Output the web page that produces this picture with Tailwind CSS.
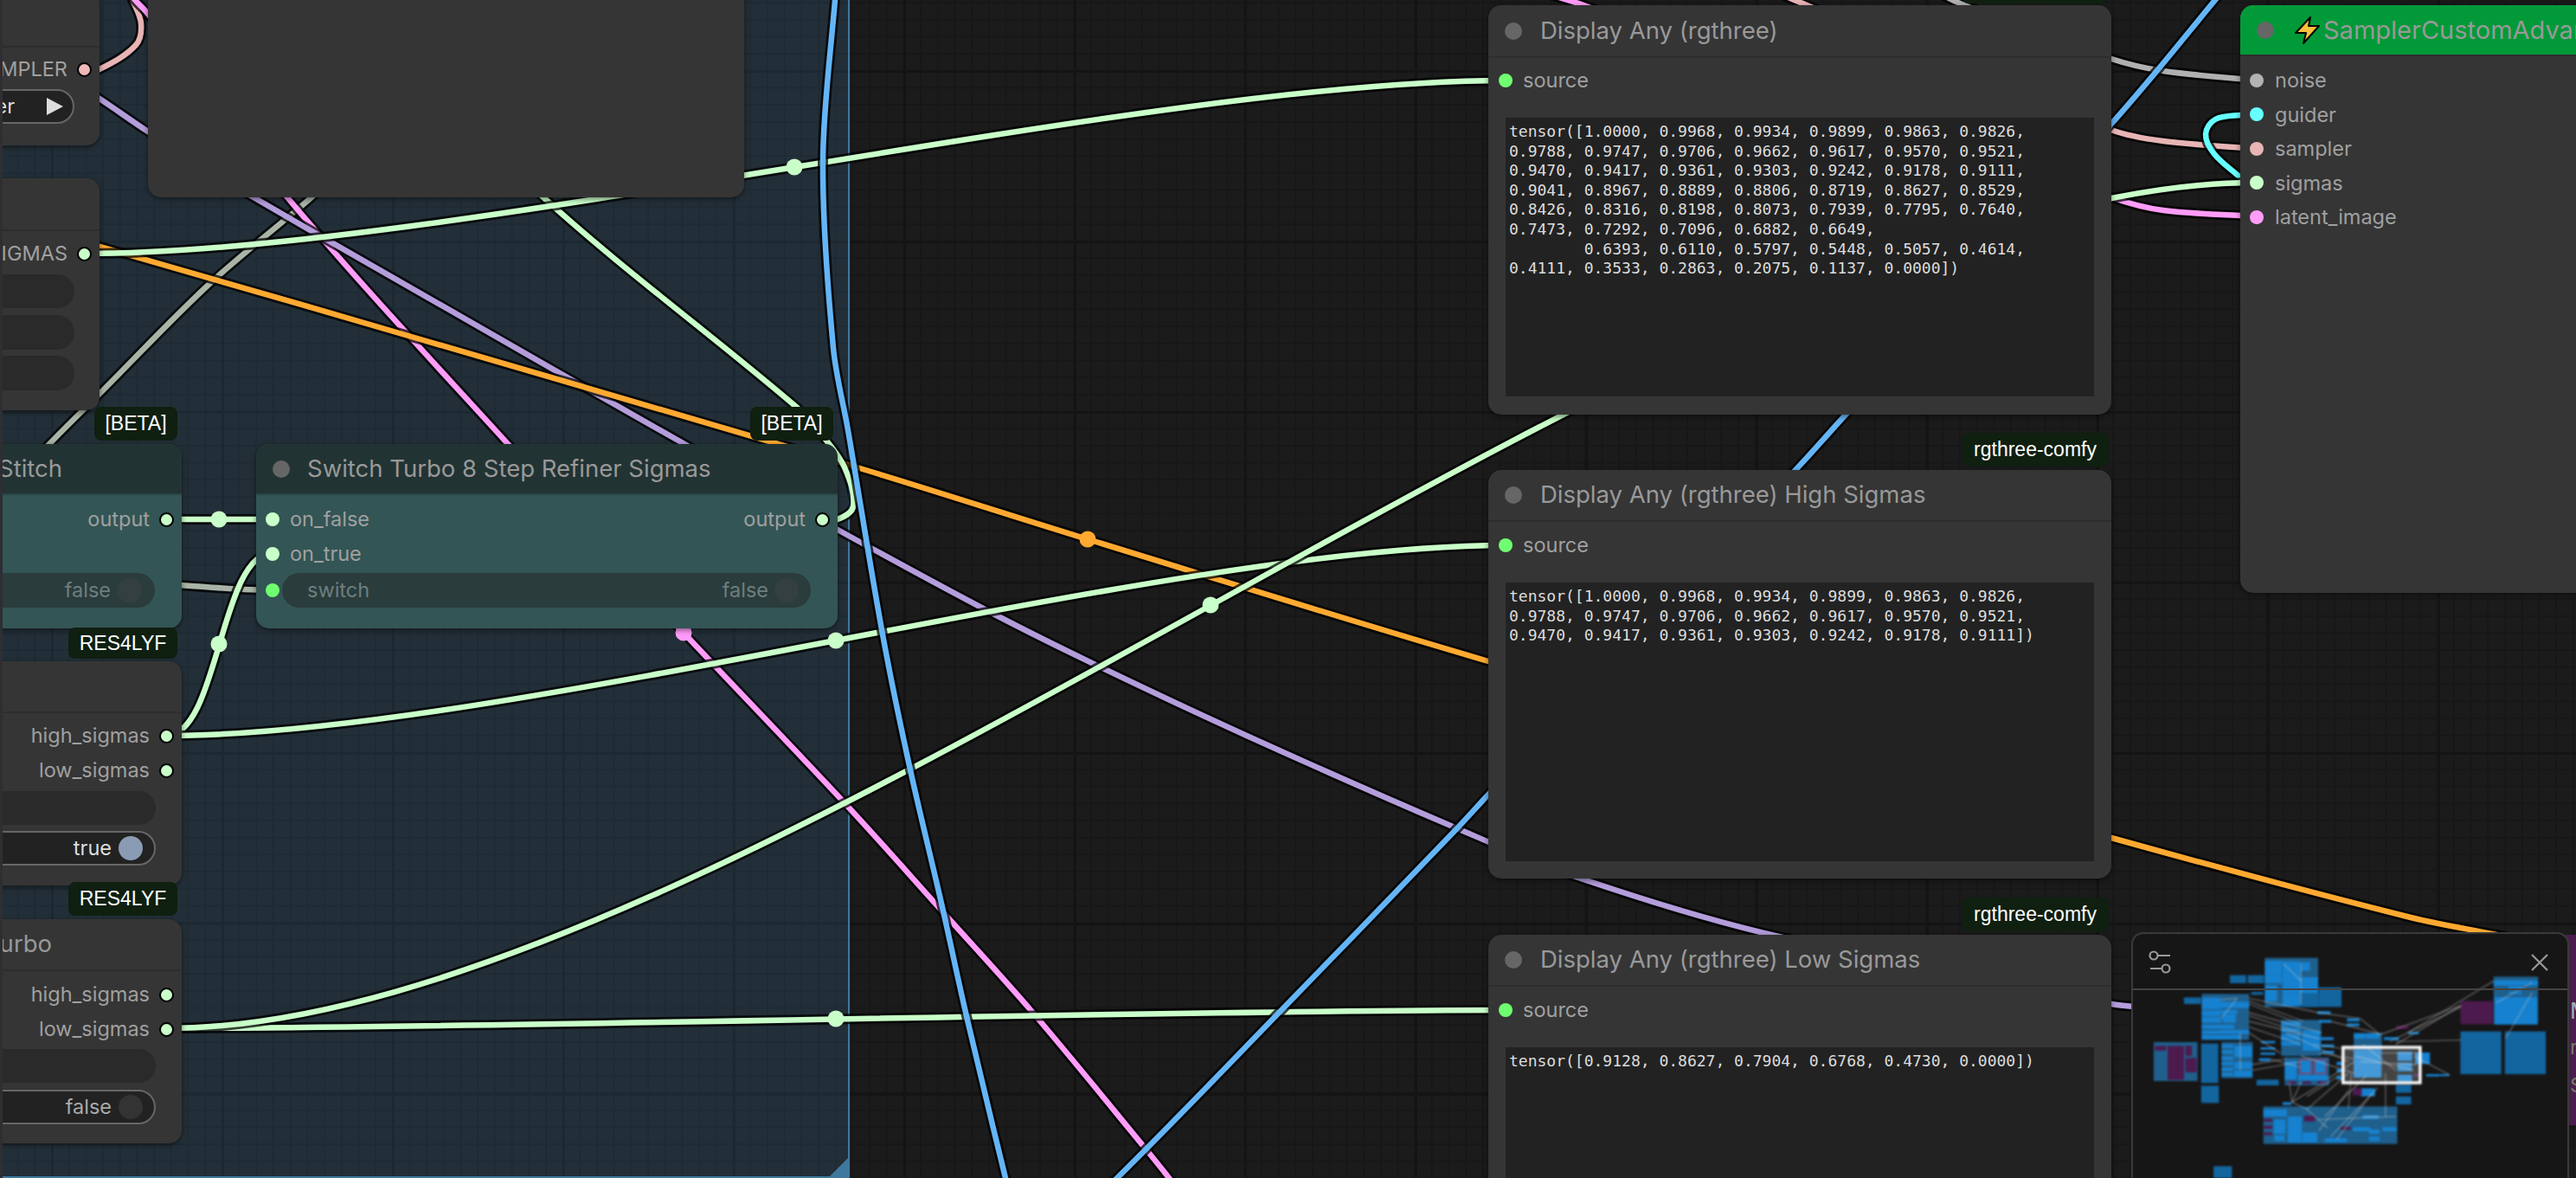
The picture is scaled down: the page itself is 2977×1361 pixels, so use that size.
<!DOCTYPE html>
<html lang="en">
<head>
<meta charset="UTF-8">
<title>ComfyUI</title>
<script src="https://cdn.jsdelivr.net/npm/@tailwindcss/browser@4"></script>
</head>
<body class="bg-[#1b1b1b]">
<div class="relative w-[2977px] h-[1361px] overflow-hidden font-[Inter,sans-serif] text-[23.5px] text-[#a0a0a0] bg-[#1b1b1b] bg-[linear-gradient(90deg,#141414_3px,transparent_3px),linear-gradient(#141414_3px,transparent_3px),linear-gradient(90deg,#171717_2px,transparent_2px),linear-gradient(#171717_2px,transparent_2px)] bg-[size:197px_197px,197px_197px,19.7px_19.7px,19.7px_19.7px] bg-[position:59px_81px,59px_81px,0px_2px,0px_2px]">

  <!-- group behind the nodes -->
  <div class="absolute left-0 top-[-10px] w-[982px] h-[1371px] bg-[#3f789e]/[0.22] border-r-2 border-b-2 border-[#3f789e]">
    <svg class="absolute right-0 bottom-0" width="21" height="21"><polygon points="21,0 21,21 0,21" fill="#3f789e"/></svg>
  </div>

  <!-- wires, filled by the script below -->
  <svg id="wires" class="absolute left-0 top-0" width="2977" height="1361"></svg>

  <!-- purple node under the minimap -->
  <div class="absolute left-[2950px] top-[1080px] w-[80px] h-[220px] bg-[#4a1d4e] text-[#aaa]">
    <div class="pl-[20px] pt-[72px] text-[26px] leading-[32px]">M</div>
    <div class="pl-[20px] pt-[10px] text-[#776] leading-[32px]">r</div>
    <div class="pl-[20px] pt-[12px] text-[#776] leading-[32px]">S</div>
  </div>

  <!-- sampler select node, left edge -->
  <div class="absolute left-[-300px] top-[-10px] w-[415px] h-[178px] rounded-[15px] bg-[#353535] shadow-[0_2px_6px_rgba(0,0,0,0.5)] flex flex-col">
    <div class="h-[65px] border-b-2 border-[#2d2d2d] shrink-0"></div>
    <div class="h-[40px] mt-[5px] flex items-center justify-end gap-[11px] pr-[9px]"><span>SAMPLER</span><span class="w-[17px] h-[17px] rounded-full bg-[#f0b8b8] border-2 border-black"></span></div>
    <div class="h-[40px] mt-[3px] mr-[29px] ml-[30px] rounded-full bg-[#222] border-2 border-[#666] flex items-center justify-end text-[#ddd] pr-[11px] gap-[37px]"><span>sampler</span><svg width="19" height="20" viewBox="0 0 19 20"><polygon points="0,0 19,10 0,20" fill="#ddd"/></svg></div>
  </div>

  <!-- large empty node -->
  <div class="absolute left-[171px] top-[-20px] w-[689px] h-[248px] rounded-[15px] bg-[#353535] shadow-[0_2px_6px_rgba(0,0,0,0.5)]"></div>

  <!-- sigmas node, left edge -->
  <div class="absolute left-[-300px] top-[206px] w-[415px] h-[268px] rounded-[15px] bg-[#353535] shadow-[0_2px_6px_rgba(0,0,0,0.5)] flex flex-col">
    <div class="h-[61px] border-b-2 border-[#2d2d2d] shrink-0"></div>
    <div class="h-[40px] mt-[6px] flex items-center justify-end gap-[11px] pr-[9px]"><span>SIGMAS</span><span class="w-[17px] h-[17px] rounded-full bg-[#c9ffc9] border-2 border-black"></span></div>
    <div class="h-[39px] mt-[4px] mr-[29px] ml-[30px] rounded-full bg-[#2a2a2a]"></div>
    <div class="h-[40px] mt-[8px] mr-[29px] ml-[30px] rounded-full bg-[#2a2a2a]"></div>
    <div class="h-[40px] mt-[7px] mr-[29px] ml-[30px] rounded-full bg-[#2a2a2a]"></div>
  </div>

  <!-- stitch node, left edge -->
  <div class="absolute left-[-300px] top-[513px] w-[510px] h-[213px] rounded-[15px] bg-[#335555] shadow-[0_2px_6px_rgba(0,0,0,0.5)] flex flex-col">
    <div class="h-[59px] rounded-t-[15px] bg-[#223333] border-b-2 border-[#2a4444] shrink-0 flex items-center justify-end pr-[138px] text-[#999] text-[27.5px]">Stitch</div>
    <div class="h-[40px] mt-[8px] flex items-center justify-end gap-[11px] pr-[9px]"><span>output</span><span class="w-[17px] h-[17px] rounded-full bg-[#c9ffc9] border-2 border-black"></span></div>
    <div class="h-[40px] mt-[42px] mr-[31px] ml-[30px] rounded-full bg-[#2a3c3c] flex items-center justify-end gap-[8px] pr-[15px] text-[#6d7f7f]"><span>false</span><span class="w-[28px] h-[28px] rounded-full bg-[#33403f]"></span></div>
  </div>

  <!-- switch node -->
  <div class="absolute left-[296px] top-[513px] w-[672px] h-[213px] rounded-[15px] bg-[#335555] shadow-[0_2px_6px_rgba(0,0,0,0.5)] flex flex-col">
    <div class="h-[59px] rounded-t-[15px] bg-[#223333] border-b-2 border-[#2a4444] shrink-0 flex items-center gap-[20px] pl-[19px] text-[#999] text-[27.5px]"><span class="w-[20px] h-[20px] rounded-full bg-[#666]"></span><span>Switch Turbo 8 Step Refiner Sigmas</span></div>
    <div class="h-[40px] mt-[8px] flex items-center justify-between pl-[11px] pr-[9px]">
      <div class="flex items-center gap-[12px]"><span class="w-[16px] h-[16px] rounded-full bg-[#c9ffc9]"></span><span>on_false</span></div>
      <div class="flex items-center gap-[11px]"><span>output</span><span class="w-[17px] h-[17px] rounded-full bg-[#c9ffc9] border-2 border-black"></span></div>
    </div>
    <div class="h-[40px] flex items-center gap-[12px] pl-[11px]"><span class="w-[16px] h-[16px] rounded-full bg-[#c9ffc9]"></span><span>on_true</span></div>
    <div class="h-[40px] mt-[2px] flex items-center gap-[3px] pl-[11px] pr-[31px]">
      <span class="w-[16px] h-[16px] rounded-full bg-[#70ff70] shrink-0"></span>
      <div class="h-[40px] flex-1 rounded-full bg-[#2a3c3c] flex items-center justify-between pl-[29px] pr-[14px] text-[#6d7f7f]"><span>switch</span><div class="flex items-center gap-[7px]"><span>false</span><span class="w-[28px] h-[28px] rounded-full bg-[#33403f]"></span></div></div>
    </div>
  </div>

  <!-- sigma split nodes, left edge -->
  <div class="absolute left-[-300px] top-[764px] w-[510px] h-[259px] rounded-[15px] bg-[#353535] shadow-[0_2px_6px_rgba(0,0,0,0.5)] flex flex-col">
    <div class="h-[60px] border-b-2 border-[#2d2d2d] shrink-0"></div>
    <div class="h-[40px] mt-[6px] flex items-center justify-end gap-[11px] pr-[9px]"><span>high_sigmas</span><span class="w-[17px] h-[17px] rounded-full bg-[#c9ffc9] border-2 border-black"></span></div>
    <div class="h-[40px] flex items-center justify-end gap-[11px] pr-[9px]"><span>low_sigmas</span><span class="w-[17px] h-[17px] rounded-full bg-[#c9ffc9] border-2 border-black"></span></div>
    <div class="h-[39px] mt-[4px] mr-[30px] ml-[30px] rounded-full bg-[#2a2a2a]"></div>
    <div class="h-[40px] mt-[7px] mr-[30px] ml-[30px] rounded-full bg-[#222] border-2 border-[#666] flex items-center justify-end gap-[8px] pr-[13px] text-[#ddd]"><span>true</span><span class="w-[28px] h-[28px] rounded-full bg-[#8a9bb4]"></span></div>
  </div>

  <div class="absolute left-[-300px] top-[1062px] w-[510px] h-[259px] rounded-[15px] bg-[#353535] shadow-[0_2px_6px_rgba(0,0,0,0.5)] flex flex-col">
    <div class="h-[60px] border-b-2 border-[#2d2d2d] shrink-0 flex items-center justify-end pr-[150px] text-[#999] text-[27.5px]">Turbo</div>
    <div class="h-[40px] mt-[7px] flex items-center justify-end gap-[11px] pr-[9px]"><span>high_sigmas</span><span class="w-[17px] h-[17px] rounded-full bg-[#c9ffc9] border-2 border-black"></span></div>
    <div class="h-[40px] flex items-center justify-end gap-[11px] pr-[9px]"><span>low_sigmas</span><span class="w-[17px] h-[17px] rounded-full bg-[#c9ffc9] border-2 border-black"></span></div>
    <div class="h-[39px] mt-[3px] mr-[30px] ml-[30px] rounded-full bg-[#2a2a2a]"></div>
    <div class="h-[40px] mt-[8px] mr-[30px] ml-[30px] rounded-full bg-[#222] border-2 border-[#666] flex items-center justify-end gap-[8px] pr-[13px] text-[#aaa]"><span>false</span><span class="w-[28px] h-[28px] rounded-full bg-[#333]"></span></div>
  </div>

  <!-- display nodes -->
  <div class="absolute left-[1720px] top-[6px] w-[720px] h-[473px] rounded-[15px] bg-[#353535] shadow-[0_2px_6px_rgba(0,0,0,0.5)] flex flex-col">
    <div class="h-[61px] border-b-2 border-[#2d2d2d] shrink-0 flex items-center gap-[21px] pl-[19px] text-[#999] text-[27.5px]"><span class="w-[20px] h-[20px] rounded-full bg-[#666]"></span><span>Display Any (rgthree)</span></div>
    <div class="h-[40px] mt-[6px] flex items-center gap-[12px] pl-[12px]"><span class="w-[16px] h-[16px] rounded-full bg-[#70ff70]"></span><span>source</span></div>
    <pre class="h-[322px] mt-[23px] mx-[20px] pl-[4px] pt-[5px] bg-[#222] font-['DejaVu_Sans_Mono',monospace] text-[18px] leading-[22.6px] text-[#ddd]">tensor([1.0000, 0.9968, 0.9934, 0.9899, 0.9863, 0.9826,
0.9788, 0.9747, 0.9706, 0.9662, 0.9617, 0.9570, 0.9521,
0.9470, 0.9417, 0.9361, 0.9303, 0.9242, 0.9178, 0.9111,
0.9041, 0.8967, 0.8889, 0.8806, 0.8719, 0.8627, 0.8529,
0.8426, 0.8316, 0.8198, 0.8073, 0.7939, 0.7795, 0.7640,
0.7473, 0.7292, 0.7096, 0.6882, 0.6649,
        0.6393, 0.6110, 0.5797, 0.5448, 0.5057, 0.4614,
0.4111, 0.3533, 0.2863, 0.2075, 0.1137, 0.0000])</pre>
  </div>

  <div class="absolute left-[1720px] top-[543px] w-[720px] h-[472px] rounded-[15px] bg-[#353535] shadow-[0_2px_6px_rgba(0,0,0,0.5)] flex flex-col">
    <div class="h-[60px] border-b-2 border-[#2d2d2d] shrink-0 flex items-center gap-[21px] pl-[19px] text-[#999] text-[27.5px]"><span class="w-[20px] h-[20px] rounded-full bg-[#666]"></span><span>Display Any (rgthree) High Sigmas</span></div>
    <div class="h-[40px] mt-[7px] flex items-center gap-[12px] pl-[12px]"><span class="w-[16px] h-[16px] rounded-full bg-[#70ff70]"></span><span>source</span></div>
    <pre class="h-[322px] mt-[23px] mx-[20px] pl-[4px] pt-[5px] bg-[#222] font-['DejaVu_Sans_Mono',monospace] text-[18px] leading-[22.6px] text-[#ddd]">tensor([1.0000, 0.9968, 0.9934, 0.9899, 0.9863, 0.9826,
0.9788, 0.9747, 0.9706, 0.9662, 0.9617, 0.9570, 0.9521,
0.9470, 0.9417, 0.9361, 0.9303, 0.9242, 0.9178, 0.9111])</pre>
  </div>

  <div class="absolute left-[1720px] top-[1080px] w-[720px] h-[472px] rounded-[15px] bg-[#353535] shadow-[0_2px_6px_rgba(0,0,0,0.5)] flex flex-col">
    <div class="h-[60px] border-b-2 border-[#2d2d2d] shrink-0 flex items-center gap-[21px] pl-[19px] text-[#999] text-[27.5px]"><span class="w-[20px] h-[20px] rounded-full bg-[#666]"></span><span>Display Any (rgthree) Low Sigmas</span></div>
    <div class="h-[40px] mt-[7px] flex items-center gap-[12px] pl-[12px]"><span class="w-[16px] h-[16px] rounded-full bg-[#70ff70]"></span><span>source</span></div>
    <pre class="h-[322px] mt-[23px] mx-[20px] pl-[4px] pt-[5px] bg-[#222] font-['DejaVu_Sans_Mono',monospace] text-[18px] leading-[22.6px] text-[#ddd]">tensor([0.9128, 0.8627, 0.7904, 0.6768, 0.4730, 0.0000])</pre>
  </div>

  <!-- sampler node -->
  <div class="absolute left-[2589px] top-[6px] w-[520px] h-[679px] rounded-[15px] bg-[#353535] shadow-[0_2px_6px_rgba(0,0,0,0.5)] flex flex-col">
    <div class="h-[59px] rounded-t-[15px] bg-[#029a38] border-b-2 border-[#2d2d2d] shrink-0 flex items-center pl-[19px] text-[#999] text-[29px] whitespace-nowrap">
      <span class="w-[20px] h-[20px] rounded-full bg-[#666] mr-[24px]"></span>
      <svg class="mr-[4px]" width="29" height="32" viewBox="0 0 29 32"><polygon points="18,1 1,19 13,19 10,31 28,11 16,11" fill="#fbbf3b" stroke="#000" stroke-width="2" stroke-linejoin="round"/></svg>
      <span>SamplerCustomAdvanced</span>
    </div>
    <div class="pt-[8px] pl-[11px] flex flex-col">
      <div class="h-[39.5px] flex items-center gap-[13px]"><span class="w-[16px] h-[16px] rounded-full bg-[#b3b3b3]"></span><span>noise</span></div>
      <div class="h-[39.5px] flex items-center gap-[13px]"><span class="w-[16px] h-[16px] rounded-full bg-[#6ff]"></span><span>guider</span></div>
      <div class="h-[39.5px] flex items-center gap-[13px]"><span class="w-[16px] h-[16px] rounded-full bg-[#e8b4b4]"></span><span>sampler</span></div>
      <div class="h-[39.5px] flex items-center gap-[13px]"><span class="w-[16px] h-[16px] rounded-full bg-[#c9ffc9]"></span><span>sigmas</span></div>
      <div class="h-[39.5px] flex items-center gap-[13px]"><span class="w-[16px] h-[16px] rounded-full bg-[#ff9cf9]"></span><span>latent_image</span></div>
    </div>
  </div>

  <!-- source badges -->
  <div class="absolute left-[109px] top-[470px] w-[96px] h-[39px] rounded-[8px] bg-[#0f1f10] text-white text-[23px] font-['Liberation_Sans',sans-serif] flex items-center justify-center">[BETA]</div>
  <div class="absolute left-[867px] top-[470px] w-[96px] h-[39px] rounded-[8px] bg-[#0f1f10] text-white text-[23px] font-['Liberation_Sans',sans-serif] flex items-center justify-center">[BETA]</div>
  <div class="absolute left-[79px] top-[725px] w-[126px] h-[36px] rounded-[8px] bg-[#0f1f10] text-white text-[23px] font-['Liberation_Sans',sans-serif] flex items-center justify-center">RES4LYF</div>
  <div class="absolute left-[79px] top-[1019px] w-[126px] h-[39px] rounded-[8px] bg-[#0f1f10] text-white text-[23px] font-['Liberation_Sans',sans-serif] flex items-center justify-center">RES4LYF</div>
  <div class="absolute left-[2267px] top-[-35px] w-[170px] h-[39px] rounded-[8px] bg-[#0f1f10] text-white text-[23px] font-['Liberation_Sans',sans-serif] flex items-center justify-center">rgthree-comfy</div>
  <div class="absolute left-[2267px] top-[500px] w-[170px] h-[39px] rounded-[8px] bg-[#0f1f10] text-white text-[23px] font-['Liberation_Sans',sans-serif] flex items-center justify-center">rgthree-comfy</div>
  <div class="absolute left-[2267px] top-[1037px] w-[170px] h-[39px] rounded-[8px] bg-[#0f1f10] text-white text-[23px] font-['Liberation_Sans',sans-serif] flex items-center justify-center">rgthree-comfy</div>

  <!-- minimap -->
  <div class="absolute left-[2463px] top-[1077px] w-[506px] h-[300px] rounded-[14px] bg-[#161616] border-2 border-[#3a3a3a] overflow-hidden">
    <svg id="map" class="absolute left-[-25px] top-[-19px] blur-[0.8px]" width="537" height="301" viewBox="0 0 1568 903" preserveAspectRatio="none"></svg>
    <div class="relative h-[65px] border-b-2 border-[#444] flex items-start justify-between pl-[18px] pr-[21px] pt-[19px]">
      <svg width="26" height="28" viewBox="0 0 26 28" fill="none" stroke="#999" stroke-width="2.2"><circle cx="6" cy="6" r="4.5"/><path d="M11 6H25"/><circle cx="20" cy="21" r="4.5"/><path d="M2 21H15"/></svg>
      <svg class="mt-[3px]" width="22" height="22" viewBox="0 0 22 22" fill="none" stroke="#999" stroke-width="2.2"><path d="M2 2L20 20M20 2L2 20"/></svg>
    </div>
  </div>

  <!-- strip on the window edge -->
  <div class="absolute left-0 top-0 w-[3px] h-[1361px] bg-[#2e2e33]"></div>
</div>

<script>
const NS = 'http://www.w3.org/2000/svg';
const GREEN = '#c9ffc9', PINK = '#ff9cf9', PURPLE = '#b39ddb', ORANGE = '#ffa931', BLUE = '#64b5f6', GREY = '#a9b4a6', SALMON = '#e8b4b4', NOISE = '#b0b0b0', CYAN = '#6ff';

function el(parent, name, attrs) {
    const node = document.createElementNS(NS, name);
    for (const k in attrs) node.setAttribute(k, attrs[k]);
    parent.appendChild(node);
    return node;
}

// same curve as the editor's spline links, control offset is a quarter of the distance
function spline(a, b) {
    const d = Math.hypot(b[0] - a[0], b[1] - a[1]) * 0.25;
    return `M${a[0]} ${a[1]}C${a[0] + d} ${a[1]} ${b[0] - d} ${b[1]} ${b[0]} ${b[1]}`;
}

// links whose ends are off screen: smooth path through points read off the picture.
// handles are a third of each segment so long and short segments don't overshoot
function through(p) {
    const dir = (a, b) => {
        const l = Math.hypot(b[0] - a[0], b[1] - a[1]) || 1;
        return [(b[0] - a[0]) / l, (b[1] - a[1]) / l];
    };
    let d = `M${p[0][0]} ${p[0][1]}`;
    for (let i = 0; i < p.length - 1; i++) {
        const p1 = p[i], p2 = p[i + 1];
        const t1 = dir(p[i - 1] || p1, p2), t2 = dir(p1, p[i + 2] || p2);
        const h = Math.hypot(p2[0] - p1[0], p2[1] - p1[1]) / 3;
        d += `C${p1[0] + t1[0] * h} ${p1[1] + t1[1] * h} ${p2[0] - t2[0] * h} ${p2[1] - t2[1] * h} ${p2[0]} ${p2[1]}`;
    }
    return d;
}

const links = [
    [NOISE, through([[2240, -8], [2270, 6], [2440, 68], [2500, 82], [2610, 93]])],
    [SALMON, through([[2050, -10], [2088, 6], [2440, 150], [2500, 163], [2610, 172]])],
    [SALMON, through([[145, -15], [153, 0], [163, 27], [157, 52], [115, 80], [98, 82]])],
    [PINK, through([[1785, -8], [1830, 6], [2440, 228], [2500, 243], [2610, 250]])],
    [CYAN, through([[2610, 133], [2589, 133], [2560, 138], [2549, 155], [2559, 178], [2589, 205], [2610, 225]])],
    [GREY, through([[400, 190], [360, 228], [242, 328], [115, 455], [57, 513], [0, 575]])],
    [GREY, spline([100, 670], [315, 682])],
    [PINK, through([[140, -20], [156, 0], [171, 16], [332, 228], [587, 513], [790, 731], [980, 932], [1089, 1053], [1192, 1168], [1327, 1331], [1351, 1361], [1370, 1385]])],
    [PURPLE, through([[60, 80], [115, 114], [171, 152], [293, 228], [791, 513], [968, 612], [1140, 705], [1268, 769], [1443, 851], [1679, 955], [1827, 1015], [2047, 1080], [2440, 1160], [2480, 1164]])],
    [ORANGE, through([[60, 270], [116, 285], [472, 388], [987, 539], [1257, 623], [1720, 764], [2440, 968], [2786, 1060], [2885, 1080], [2990, 1102]])],
    [GREEN, through([[949, 600], [968, 600], [986, 585], [976, 540], [951, 504], [919, 469], [628, 228], [480, 70]])],
    [GREEN, spline([98, 293], [1740, 93])],
    [GREEN, spline([192, 600], [315, 600])],
    [GREEN, spline([192, 850], [315, 639])],
    [GREEN, spline([192, 850], [1740, 630])],
    [GREEN, spline([192, 1188], [1740, 1167])],
    [GREEN, spline([192, 1188], [2606, 211])],
    [BLUE, through([[968, -20], [965, 0], [951, 187], [963, 402], [980, 497], [1020, 733], [1051, 885], [1089, 1048], [1117, 1174], [1162, 1361], [1170, 1390]])],
    [BLUE, through([[1250, 1395], [1291, 1361], [1480, 1168], [1683, 958], [1720, 918], [2075, 543], [2133, 479], [2440, 143], [2500, 73], [2560, 0], [2590, -35]])],
];
const centers = [
    [ORANGE, 1257, 623], [PINK, 790, 731], [GREEN, 918, 193], [GREEN, 253, 600], [GREEN, 253, 744],
    [GREEN, 966, 740], [GREEN, 966, 1177], [GREEN, 1399, 699],
];

const wires = document.getElementById('wires');
for (const [color, d] of links) {
    el(wires, 'path', { d, fill: 'none', stroke: '#000', 'stroke-opacity': 0.75, 'stroke-width': 12 });
    el(wires, 'path', { d, fill: 'none', stroke: color, 'stroke-width': 6.5 });
}
for (const [color, x, y] of centers) el(wires, 'circle', { cx: x, cy: y, r: 9.5, fill: color });

// minimap, coordinates are in the svg's own 1568x903 box
const BRIGHT = '#1681cf', DARK = '#13659f', GROUP = '#1f5f8c', VIOLET = '#4d1a4d';
const boxes = {
    [GROUP]: [[518,140,180,170],[305,265,160,160],[143,432,148,135],[372,432,105,125],[573,355,135,125],[585,485,150,97],[818,400,95,155],[513,655,452,130],[1290,205,150,165]],
    [DARK]: [[400,200,55,28],[460,200,55,28],[700,242,77,68],[640,262,60,48],[245,277,57,23],[303,437,58,137],[303,583,60,60],[1178,395,138,148],[1328,395,138,148],[490,562,75,20],[960,580,52,28],[960,620,52,28],[345,862,62,50],[472,258,40,10]],
    [BRIGHT]: [[518,150,58,50],[578,152,60,55],[640,155,30,30],[518,200,58,28],[578,207,120,55],[518,235,42,55],[578,262,60,45],
        [305,278,65,40],[370,292,95,22],[305,322,65,20],[370,320,55,14],[305,345,65,20],[375,335,45,30],[305,372,110,14],[305,392,60,12],[365,390,100,14],[305,408,130,14],
        [372,440,40,12],[372,460,40,12],[415,445,60,40],[372,482,40,12],[372,500,40,12],[372,520,40,12],[415,500,60,25],[415,530,60,22],[372,538,40,12],
        [573,362,65,14],[573,382,65,14],[573,404,65,22],[573,430,65,14],[645,392,60,70],[585,497,40,65],[637,493,38,48],[686,493,38,48],[630,545,100,20],
        [818,402,40,18],[860,402,45,18],[818,460,92,95],[1290,218,150,18],[1340,238,45,12],[1340,258,45,8],[1293,276,145,95],
        [513,665,80,25],[548,700,40,50],[550,755,35,20],[595,690,48,90],[645,745,50,35],[815,727,60,14],[915,727,48,14],[870,735,35,15],[870,760,35,15],[720,765,75,14],[848,685,55,14],
        [840,592,50,28],[1025,468,50,40],[965,465,50,32],[965,503,50,30],[965,545,50,22],[920,415,50,10],
        [695,325,45,10],[700,355,42,10],[795,350,42,10],[795,367,42,10],[1003,397,35,8],[705,415,45,10],[710,440,42,10],[710,462,42,10],[505,428,48,8],[503,450,50,8],[503,468,50,8],[498,488,38,10],[760,500,25,12],[760,525,25,12],[760,550,25,12],[1062,543,45,8],[1108,543,33,7],[578,640,30,10]],
    [VIOLET]: [[1178,290,110,80],[147,445,38,16],[190,445,55,118],[250,445,22,35],[250,487,38,50],[962,375,40,12],[650,687,38,20],[773,725,35,11],[515,698,28,10],[515,722,28,10],[515,745,28,10],[815,592,30,25],[595,568,30,9],[645,568,30,9],[695,568,30,9],[1020,542,20,10]],
};
const map = document.getElementById('map');
for (const color in boxes) for (const [x, y, width, height] of boxes[color]) el(map, 'rect', { x, y, width, height, fill: color });
for (const [x, y] of [[637,493],[686,493]]) el(map, 'rect', { x, y, width: 38, height: 48, fill: 'none', stroke: '#a03a5a', 'stroke-width': 4 });

const mapLinks = [
    [465,280,700,330],[465,300,640,370],[465,330,710,400],[465,380,640,440],[465,400,570,470],[465,290,650,360],[465,340,640,400],[465,360,700,420],[370,285,425,280],[425,280,370,350],[435,400,435,530],
    [700,330,840,350],[740,360,910,405],[840,350,905,405],[910,405,1180,305],[960,440,1180,305],[1000,400,1290,220],[960,430,1180,425],[1300,295,1420,225],[940,430,1180,310],
    [1330,420,1420,260],[640,160,640,300],[580,160,640,220],[475,510,590,490],[475,530,640,500],[535,490,640,520],[610,640,640,570],[610,640,720,570],[660,665,800,540],[610,640,600,570],
    [720,690,860,550],[740,760,900,590],[800,660,810,540],[925,690,925,540],[660,665,610,640],[660,665,730,730],[700,700,960,690],[850,690,900,690],[840,500,1030,510],[820,480,1020,530],[1020,480,1140,545],[850,440,960,530],[910,470,1030,470],
    [640,480,820,540],[700,470,820,490],[730,560,820,500],[660,620,780,540],[700,740,800,600],[760,770,880,610],[680,440,820,460],[590,400,800,500],
];
for (const [x1, y1, x2, y2] of mapLinks) el(map, 'line', { x1, y1, x2, y2, stroke: '#ccc', 'stroke-opacity': 0.4, 'stroke-width': 4 });
el(map, 'rect', { x: 782, y: 450, width: 260, height: 123, fill: '#fff', 'fill-opacity': 0.2, stroke: '#fff', 'stroke-width': 10 });
</script>
</body>
</html>
